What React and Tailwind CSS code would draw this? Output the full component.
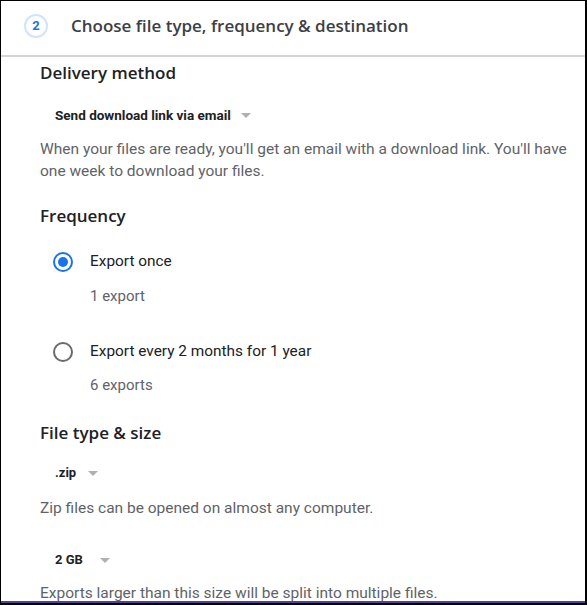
export default function App() {
  const font = { fontFamily: "Roboto, 'Liberation Sans', sans-serif" };
  const head = { fontFamily: "'Open Sans', Roboto, sans-serif" };
  const Caret = ({ gap }) => (
    <svg width="10" height="5" viewBox="0 0 10 5" className={gap}>
      <path d="M0 0 L10 0 L5 5 Z" fill="#b0b0b0" />
    </svg>
  );
  return (
    <div
      className="flex h-[605px] w-[587px] flex-col overflow-hidden border-l border-t border-r-2 border-black bg-white"
      style={font}
    >
      <div className="flex h-[56px] shrink-0 items-center border-b-2 border-[#d4d4d4] pb-[4px] pl-[23px]">
        <div className="flex h-[24px] w-[24px] items-center justify-center rounded-full border-2 border-[#d2e3fc] text-[13px] font-bold text-[#1a73e8]">
          2
        </div>
        <div className="ml-[23px] text-[17px] font-semibold text-[#3c4043]" style={head}>
          Choose file type, frequency &amp; destination
        </div>
      </div>
      <div className="flex-1 overflow-hidden pl-[39px] pr-4">
        <div className="mt-[4px] text-[17px] font-semibold leading-[24px] text-[#202124]" style={head}>Delivery method</div>
        <div className="mt-[20px] flex items-center pl-[15px] text-[13.5px] font-bold leading-[20px] text-[#202124]">
          <span>Send download link via email</span>
          <Caret gap="ml-[10px]" />
        </div>
        <div className="mt-[13px] text-[15.5px] leading-[22px] text-[#5f6368]">
          When your files are ready, you'll get an email with a download link. You'll have one week to download your files.
        </div>
        <div className="mt-[22px] text-[17px] font-semibold leading-[24px] text-[#202124]" style={head}>Frequency</div>
        <div className="mt-[22px] flex h-[24px] items-center pl-[13px]">
          <div className="flex h-[20px] w-[20px] items-center justify-center rounded-full border-2 border-[#1a73e8]">
            <div className="h-[10px] w-[10px] rounded-full bg-[#1a73e8]" />
          </div>
          <span className="ml-[17px] text-[15.4px] text-[#202124]">Export once</span>
        </div>
        <div className="mt-[12px] pl-[50px] text-[15px] leading-[20px] text-[#5f6368]">1 export</div>
        <div className="mt-[34px] flex h-[24px] items-center pl-[13px]">
          <div className="h-[20px] w-[20px] rounded-full border-2 border-[#6b6b6b]" />
          <span className="ml-[17px] text-[15.4px] text-[#202124]">Export every 2 months for 1 year</span>
        </div>
        <div className="mt-[11px] pl-[50px] text-[15px] leading-[20px] text-[#5f6368]">6 exports</div>
        <div className="mt-[26px] text-[17px] font-semibold leading-[24px] text-[#202124]" style={head}>File type &amp; size</div>
        <div className="mt-[18px] flex items-center pl-[15px] text-[13px] font-bold leading-[20px] text-[#202124]">
          <span>.zip</span>
          <Caret gap="ml-[12px]" />
        </div>
        <div className="mt-[14px] text-[15.5px] leading-[22px] text-[#5f6368]">
          Zip files can be opened on almost any computer.
        </div>
        <div className="mt-[31px] flex items-center pl-[15px] text-[13px] font-bold leading-[20px] text-[#202124]">
          <span>2 GB</span>
          <Caret gap="ml-[17px]" />
        </div>
        <div className="mt-[12px] text-[15.5px] leading-[22px] text-[#5f6368]">
          Exports larger than this size will be split into multiple files.
        </div>
      </div>
      <div className="h-[2px] shrink-0 bg-[#5b3f8f]" />
      <div className="h-[2px] shrink-0 bg-black" />
    </div>
  );
}
